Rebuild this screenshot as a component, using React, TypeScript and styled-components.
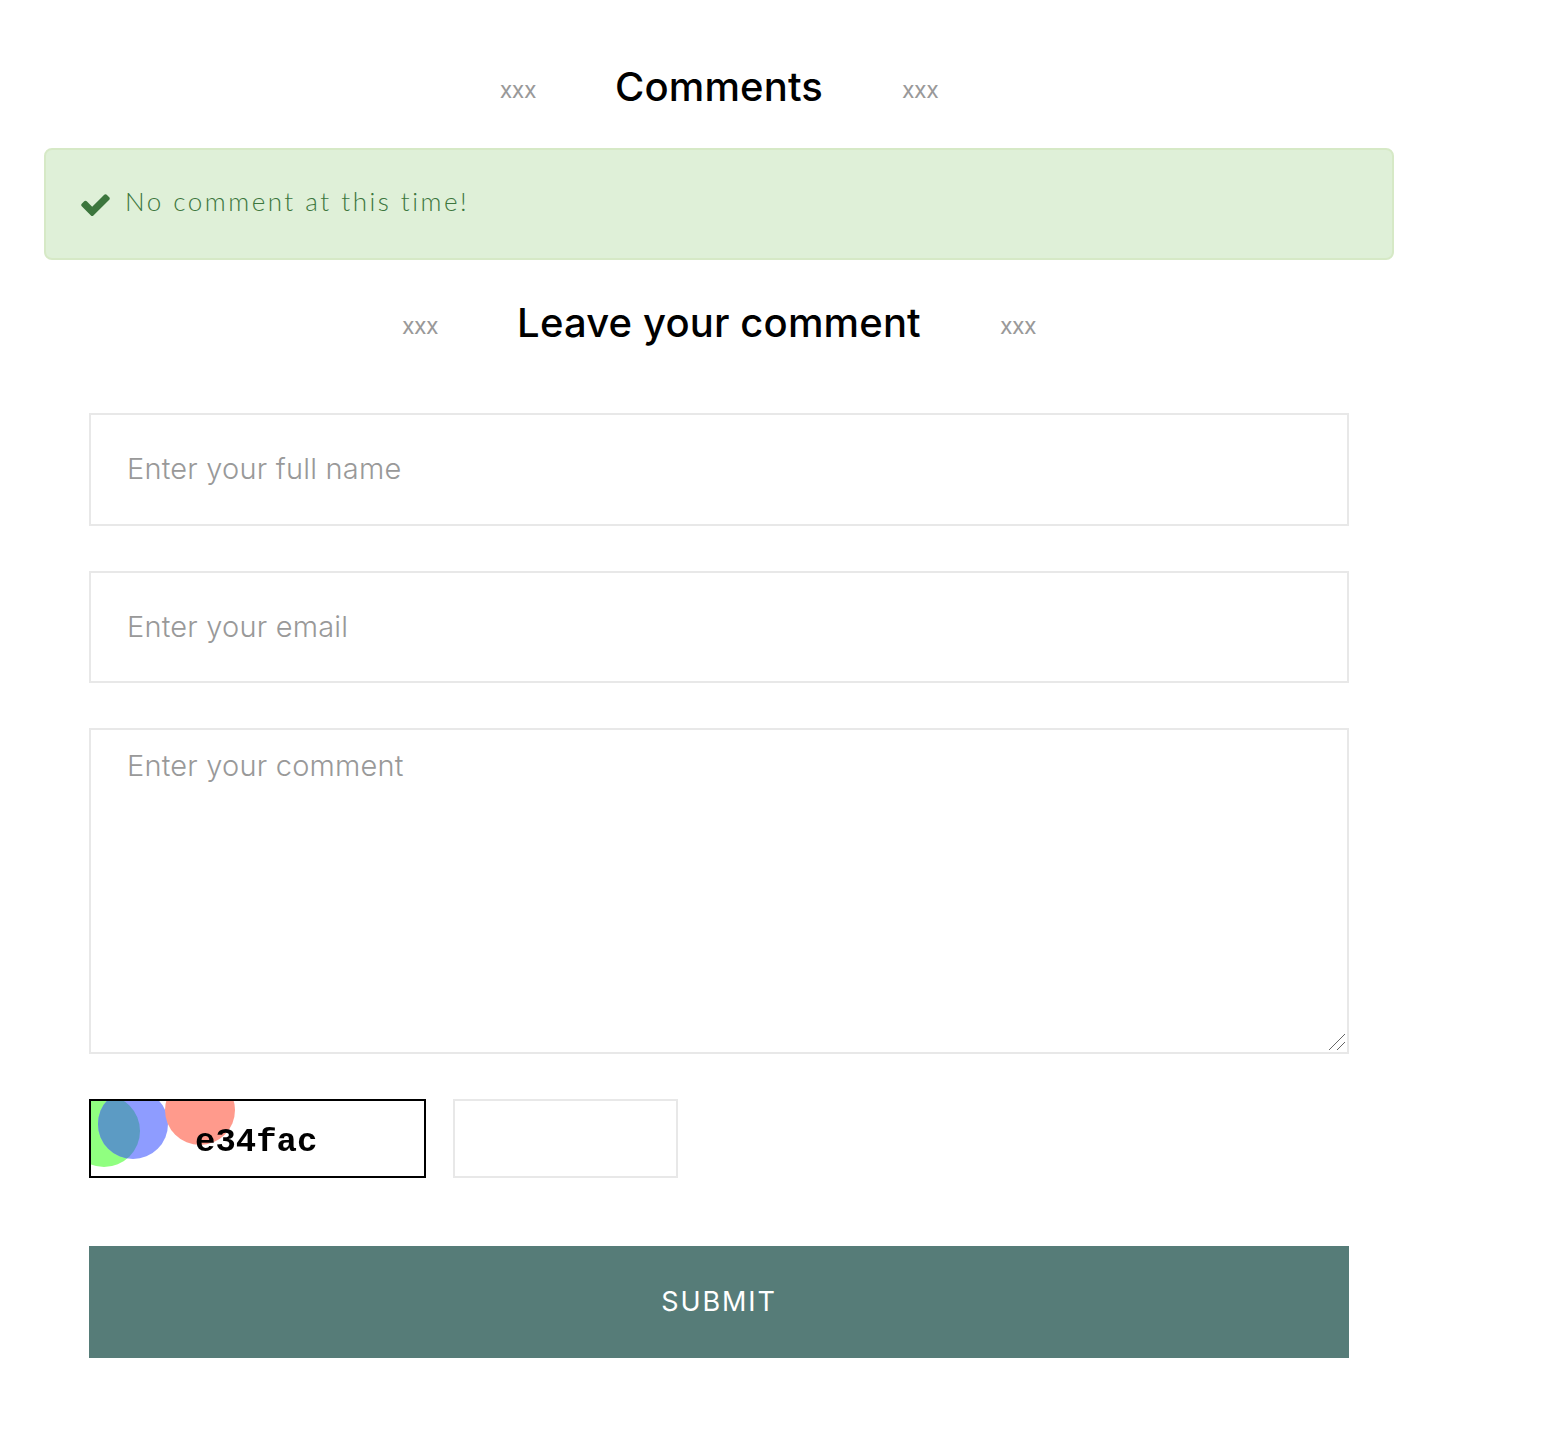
import React from "react";
import styled, { createGlobalStyle } from "styled-components";

const Global = createGlobalStyle`
  html, body {
    margin: 0;
    background: #fff;
    font-family: "Inter", "Liberation Sans", sans-serif;
  }
  * {
    box-sizing: border-box;
  }
`;

const Page = styled.div`
  width: 1350px;
  margin-left: 44px;
  padding-top: 60px;
  height: 1431px;
`;

const Heading = styled.div`
  display: flex;
  justify-content: center;
  align-items: center;
  gap: 79px;
  height: 54px;
`;

const Title = styled.h2`
  margin: 0;
  font-family: "Inter", sans-serif;
  font-size: 40px;
  font-weight: 500;
  line-height: 54px;
  color: #000;
  letter-spacing: 0.15px;
`;

const Xxx = styled.span`
  font-family: "Inter", sans-serif;
  font-size: 23px;
  letter-spacing: -0.5px;
  color: #999;
  padding-top: 6px;
`;

const Alert = styled.div`
  display: flex;
  align-items: flex-start;
  gap: 13px;
  height: 112px;
  margin-top: 34px;
  margin-bottom: 36px;
  padding: 38px 33px 0;
  background: #dff0d8;
  border: 2px solid #d6e9c6;
  border-radius: 8px;
  color: #3c763d;
`;

const Check = styled.svg`
  width: 33px;
  height: 33px;
  flex: none;
  fill: #3c763d;
`;

const AlertText = styled.span`
  font-family: "Lato", sans-serif;
  font-weight: 300;
  font-size: 26px;
  line-height: 26px;
  letter-spacing: 2.5px;
`;

const Form = styled.form`
  display: flex;
  flex-direction: column;
  padding: 0 45px;
  margin-top: 63px;
`;

const Field = styled.input<{ $h: number }>`
  display: block;
  width: 1260px;
  height: ${(p) => p.$h}px;
  margin-bottom: 45px;
  padding: 0 36px 2px;
  border: 2px solid #e8e8e8;
  outline: none;
  font-family: "Inter", sans-serif;
  font-size: 29px;
  font-weight: 300;
  letter-spacing: 0.2px;
  color: #333;
  &::placeholder {
    color: #999;
    opacity: 1;
  }
`;

const CommentWrap = styled.div`
  position: relative;
  width: 1260px;
  height: 326px;
  margin-bottom: 45px;
`;

const Comment = styled.textarea`
  display: block;
  width: 100%;
  height: 100%;
  padding: 17px 36px;
  border: 2px solid #e8e8e8;
  outline: none;
  resize: none;
  font-family: "Inter", sans-serif;
  font-size: 29px;
  font-weight: 300;
  letter-spacing: 0.2px;
  line-height: 38px;
  &::placeholder {
    color: #999;
    opacity: 1;
  }
`;

const Grip = styled.svg`
  position: absolute;
  right: 3px;
  bottom: 3px;
  width: 18px;
  height: 18px;
  stroke: #666;
  stroke-width: 1;
`;

const CaptchaRow = styled.div`
  display: flex;
  gap: 27px;
  margin-bottom: 68px;
`;

const CaptchaBox = styled.div`
  width: 337px;
  height: 79px;
  border: 2px solid #000;
  overflow: hidden;
`;

const CaptchaText = styled.text`
  font-family: "Liberation Mono", monospace;
  font-weight: 700;
  font-size: 34px;
  fill: #000;
`;

const CaptchaInput = styled.input`
  width: 225px;
  height: 79px;
  border: 2px solid #e8e8e8;
  outline: none;
`;

const Submit = styled.button`
  width: 1260px;
  height: 112px;
  padding: 0 0 2px;
  border: none;
  background: #567c78;
  color: #fff;
  font-family: "Inter", sans-serif;
  font-size: 27px;
  font-weight: 400;
  letter-spacing: 1.9px;
  text-transform: uppercase;
`;

const Captcha = () => (
  <CaptchaBox>
    <svg width="333" height="75" viewBox="0 0 333 75">
      <defs>
        <filter id="soft">
          <feGaussianBlur stdDeviation="0.6" />
        </filter>
        <clipPath id="greenDisc">
          <circle cx="13" cy="30" r="36" />
        </clipPath>
      </defs>
      <g filter="url(#soft)">
        <circle cx="13" cy="30" r="36" fill="#90ff80" />
        <circle cx="42" cy="23" r="35" fill="#8e9cff" />
        <circle cx="42" cy="23" r="35" fill="#5b9bc4" clipPath="url(#greenDisc)" />
        <circle cx="109" cy="9" r="35" fill="#ff9a8c" />
        <CaptchaText x="104" y="50">e34fac</CaptchaText>
      </g>
    </svg>
  </CaptchaBox>
);

export default function App() {
  return (
    <Page>
      <Global />
      <Heading>
        <Xxx>xxx</Xxx>
        <Title>Comments</Title>
        <Xxx>xxx</Xxx>
      </Heading>
      <Alert>
        <Check viewBox="0 0 1792 1792">
          <path d="M1671 566q0 40-28 68l-724 724-136 136q-28 28-68 28t-68-28l-136-136-362-362q-28-28-28-68t28-68l136-136q28-28 68-28t68 28l294 295 656-657q28-28 68-28t68 28l136 136q28 28 28 68z" />
        </Check>
        <AlertText>No comment at this time!</AlertText>
      </Alert>
      <Heading>
        <Xxx>xxx</Xxx>
        <Title>Leave your comment</Title>
        <Xxx>xxx</Xxx>
      </Heading>
      <Form>
        <Field $h={113} placeholder="Enter your full name" />
        <Field $h={112} placeholder="Enter your email" />
        <CommentWrap>
          <Comment placeholder="Enter your comment" />
          <Grip viewBox="0 0 18 18">
            <path d="M1 17L17 1M9 17L17 9" />
          </Grip>
        </CommentWrap>
        <CaptchaRow>
          <Captcha />
          <CaptchaInput />
        </CaptchaRow>
        <Submit type="button">Submit</Submit>
      </Form>
    </Page>
  );
}
